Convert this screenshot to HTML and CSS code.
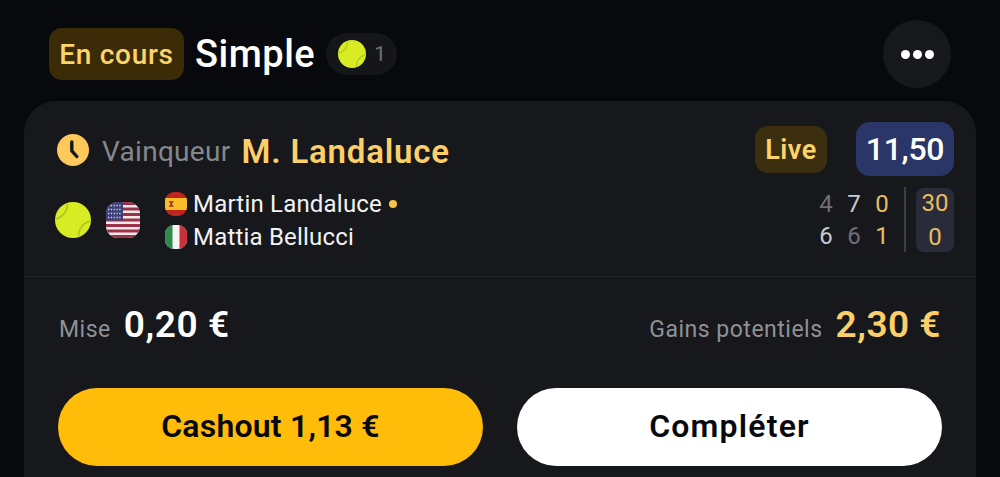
FILE: index.html
```html
<!DOCTYPE html>
<html lang="fr">
<head>
  <meta charset="UTF-8" />
  <title>Pari simple</title>
  <link rel="stylesheet" href="styles.css">
</head>
<body>
  <!-- HEADER -->
  <header class="top">
    <span class="status">En cours</span>
    <span class="bet-type">Simple</span>
    <span class="sport-count">
      <svg class="ball-sm" viewBox="0 0 36 36"><use href="#ball"/></svg>
      <span>1</span>
    </span>
    <button class="more"><i></i><i></i><i></i></button>
  </header>

  <!-- CARD -->
  <main class="card">
    <section class="selection">
      <div class="pick-row">
        <svg class="clock" viewBox="0 0 32 32">
          <circle cx="16" cy="16" r="16" fill="#fdc95b"/>
          <path d="M14.800 8v8.800l5 5.700" fill="none" stroke="#17181c" stroke-width="3.400" stroke-linecap="round" stroke-linejoin="round"/>
        </svg>
        <span class="market">Vainqueur</span>
        <span class="pick">M. Landaluce</span>
        <span class="live">Live</span>
        <span class="odds">11,50</span>
      </div>

      <div class="match-row">
        <svg class="ball" viewBox="0 0 36 36">
          <symbol id="ball" viewBox="0 0 36 36">
            <circle cx="18" cy="18" r="18" fill="#d8ec24"/>
            <path d="M12 1.500C13 9 8 15 1 17M35 19C28 21 23 27 24 34.500" fill="none" stroke="#b1c31e" stroke-width="1.500"/>
          </symbol>
          <use href="#ball"/>
        </svg>
        <svg class="flag-us" viewBox="0 0 34 36">
          <defs><clipPath id="us"><rect width="34" height="36" rx="12"/></clipPath></defs>
          <g clip-path="url(#us)">
            <rect width="34" height="36" fill="#efe9ec"/>
            <path d="M0 1.500h34M0 7h34M0 12.500h34M0 18h34M0 23.500h34M0 29h34M0 34.500h34" stroke="#9c3148" stroke-width="2.800"/>
            <rect width="17" height="18.500" fill="#3f4278"/>
            <path d="M2 3.500h14M2 7.500h14M2 11.500h14M2 15.500h14" stroke="#cfcfe2" stroke-width="1.300" stroke-dasharray="1.300 1.500"/>
          </g>
        </svg>

        <div class="players">
          <div class="player">
            <svg class="flag" viewBox="0 0 22 24">
              <defs><clipPath id="rnd"><rect width="22" height="24" rx="9"/></clipPath></defs>
              <g clip-path="url(#rnd)">
                <rect width="22" height="24" fill="#c0261e"/>
                <rect y="6" width="22" height="12" fill="#f9bd2c"/>
                <path d="M4 9h4.500v1.500h-1v3h1V15H4v-1.500h1v-3H4z" fill="#a14a26"/>
              </g>
            </svg>
            <span>Martin Landaluce</span>
            <i class="serve"></i>
          </div>
          <div class="player">
            <svg class="flag" viewBox="0 0 22 24">
              <g clip-path="url(#rnd)">
                <rect width="22" height="24" fill="#f4f4f2"/>
                <rect width="7.500" height="24" fill="#2f8a4e"/>
                <rect x="14.500" width="7.500" height="24" fill="#c9303c"/>
              </g>
            </svg>
            <span>Mattia Bellucci</span>
          </div>
        </div>

        <div class="score">
          <div class="sets">
            <span class="dim">4</span><span class="bright">7</span><span class="cur">0</span>
            <span class="bright">6</span><span class="dim">6</span><span class="cur">1</span>
          </div>
          <div class="sep"></div>
          <div class="points"><span>30</span><span>0</span></div>
        </div>
      </div>
    </section>

    <section class="totals">
      <div class="total">
        <span class="total-label">Mise</span>
        <span class="total-value">0,20 €</span>
      </div>
      <div class="total">
        <span class="total-label">Gains potentiels</span>
        <span class="total-value gold">2,30 €</span>
      </div>
    </section>

    <section class="actions">
      <button class="btn btn-cashout">Cashout 1,13 €</button>
      <button class="btn btn-complete">Compléter</button>
    </section>
  </main>
</body>
</html>
```

FILE: styles.css
```css
* {
  margin: 0;
  padding: 0;
  box-sizing: border-box;
}
html, body {
  height: 477px;
  overflow: hidden;
}
body {
  font-family: Roboto, "Liberation Sans", sans-serif;
  background-color: #08090d;
  color: #fff;
}

/* HEADER */
.top {
  display: flex;
  align-items: center;
  height: 101px;
  padding: 7px 49px 0 49px;
}
.status {
  display: flex;
  align-items: center;
  justify-content: center;
  width: 135px;
  height: 52px;
  background-color: #3b2b07;
  border-radius: 13px;
  color: #fdd469;
  font-size: 28px;
  font-weight: 500;
  letter-spacing: 0.7px;
}
.bet-type {
  margin-left: 11px;
  font-size: 38px;
  font-weight: 500;
  letter-spacing: 0.5px;
}
.sport-count {
  display: flex;
  align-items: center;
  gap: 8px;
  height: 42px;
  margin-left: 11px;
  padding: 0 11px 0 12px;
  background-color: #15161a;
  border-radius: 21px;
  color: #6e7076;
  font-size: 21px;
}
.ball-sm {
  width: 28px;
  height: 28px;
}
.more {
  display: flex;
  align-items: center;
  justify-content: center;
  gap: 3px;
  width: 68px;
  height: 68px;
  margin-left: auto;
  border: none;
  border-radius: 50%;
  background-color: #17181c;
}
.more i {
  width: 9px;
  height: 9px;
  border-radius: 50%;
  background-color: #fff;
}

/* CARD */
.card {
  margin: 0 24px;
  height: 376px;
  background-color: #17181c;
  border-radius: 32px 32px 0 0;
}
.selection {
  height: 176px;
  padding: 21px 22px 0 33px;
  border-bottom: 1px solid #24262c;
}
.pick-row {
  display: flex;
  align-items: center;
  height: 57px;
}
.clock {
  width: 32px;
  height: 32px;
  margin-top: -2px;
}
.market {
  margin-left: 13px;
  margin-top: 1px;
  color: #85878d;
  font-size: 28px;
  letter-spacing: 0.3px;
}
.pick {
  margin-left: 11px;
  margin-top: 1px;
  color: #fdcf68;
  font-size: 33px;
  font-weight: 600;
  letter-spacing: 0.8px;
}
.live {
  display: flex;
  align-items: center;
  justify-content: center;
  width: 72px;
  height: 47px;
  margin-left: auto;
  margin-top: -2px;
  background-color: #3b2f10;
  border-radius: 13px;
  color: #fdd469;
  font-size: 27px;
  font-weight: 600;
  letter-spacing: 0.5px;
}
.odds {
  display: flex;
  align-items: center;
  justify-content: center;
  width: 98px;
  height: 54px;
  margin-left: 29px;
  margin-top: -3px;
  background-color: #2a3668;
  border-radius: 14px;
  font-size: 32px;
  font-weight: 500;
  letter-spacing: -0.3px;
}
.match-row {
  display: flex;
  align-items: center;
  height: 65px;
  margin-top: 8px;
}
.ball {
  width: 36px;
  height: 36px;
  margin-left: -2px;
}
.flag-us {
  width: 34px;
  height: 36px;
  margin-left: 15px;
}
.players {
  display: flex;
  flex-direction: column;
  gap: 6px;
  margin-top: 1px;
  margin-left: 25px;
}
.player {
  display: flex;
  align-items: center;
  gap: 6px;
  height: 27px;
  font-size: 24px;
  letter-spacing: 0.2px;
  color: #f2f2f4;
}
.flag {
  width: 22px;
  height: 24px;
}
.serve {
  width: 8px;
  height: 8px;
  margin-left: 1px;
  border-radius: 50%;
  background-color: #fbc04a;
}
.score {
  display: flex;
  align-items: center;
  margin-left: auto;
}
.sets {
  display: grid;
  grid-template-columns: repeat(3, 28px);
  row-gap: 4px;
  justify-items: center;
  font-size: 24px;
  line-height: 28px;
}
.dim {
  color: #6d6f75;
}
.bright {
  color: #c9cacf;
}
.cur {
  color: #e9bd5d;
}
.sep {
  width: 2px;
  height: 65px;
  margin: 0 10px 0 8px;
  background-color: #3c3e44;
}
.points {
  display: flex;
  flex-direction: column;
  align-items: center;
  gap: 4px;
  width: 38px;
  background-color: #292b38;
  border-radius: 8px;
  color: #e9bd5d;
  font-size: 24px;
  line-height: 30px;
}

/* TOTALS */
.totals {
  display: flex;
  justify-content: space-between;
  align-items: baseline;
  padding: 26px 35px 0 35px;
  height: 111px;
}
.total {
  display: flex;
  align-items: baseline;
  gap: 13px;
}
.total-label {
  color: #8f9196;
  font-size: 23px;
  letter-spacing: 0.5px;
}
.total-value {
  font-size: 37px;
  font-weight: 600;
  letter-spacing: 0.6px;
}
.gold {
  color: #fdcf68;
  letter-spacing: 0.5px;
}

/* BUTTONS */
.actions {
  display: flex;
  gap: 34px;
  padding: 0 34px;
}
.btn {
  flex: 1;
  height: 78px;
  padding-bottom: 3px;
  border: none;
  border-radius: 39px;
  color: #08090d;
  font-family: inherit;
  font-size: 32px;
  font-weight: 600;
}
.btn-cashout {
  background-color: #ffbc08;
  letter-spacing: 0.2px;
}
.btn-complete {
  background-color: #fff;
  letter-spacing: 1.200px;
}
```
